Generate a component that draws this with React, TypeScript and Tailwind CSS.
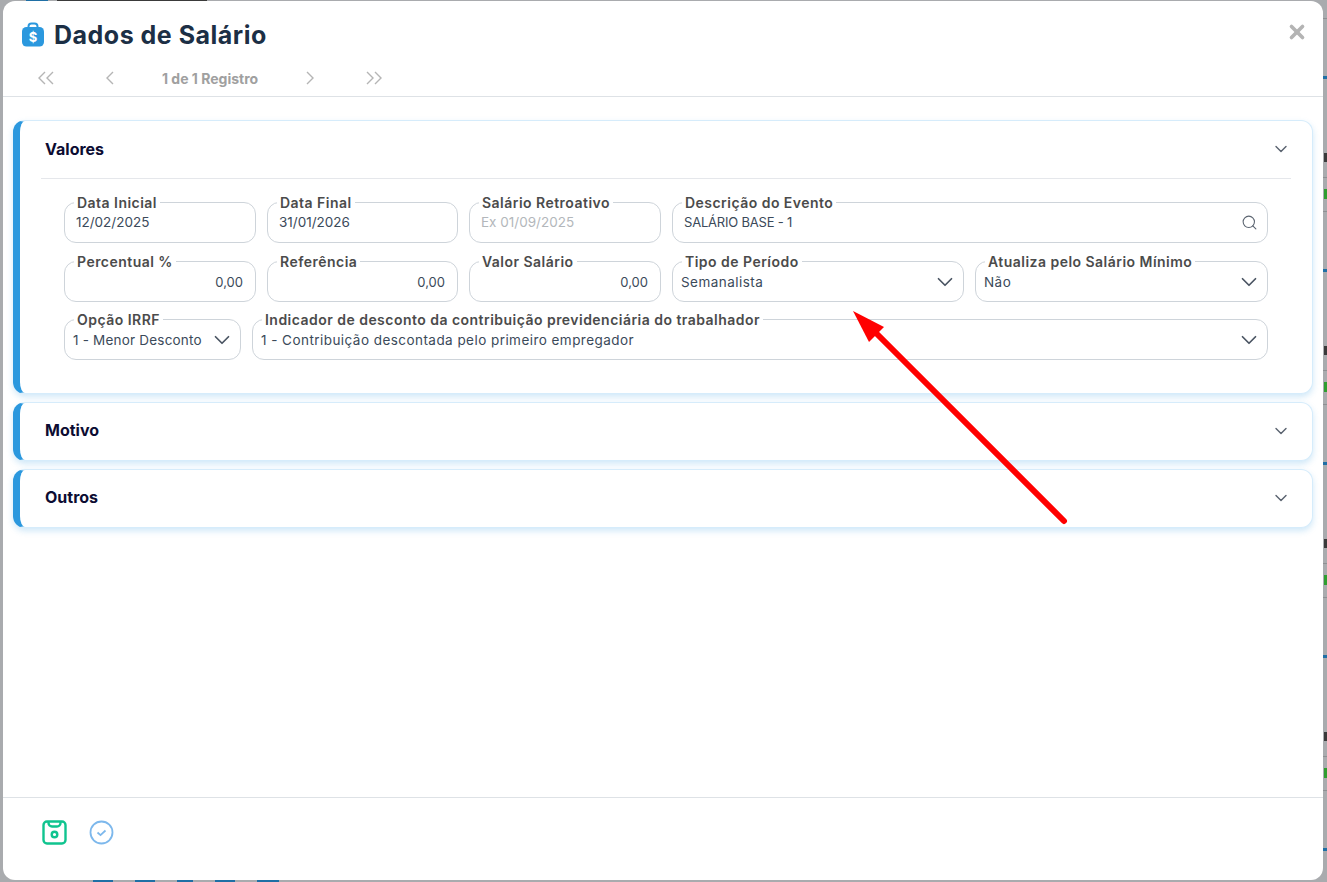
import { ChevronDown, Search, X } from "lucide-react";
import type { ReactNode } from "react";

const font = "font-['Inter','Liberation_Sans',sans-serif]";

function Field({
	label,
	className,
	children,
}: {
	label: string;
	className: string;
	children: ReactNode;
}) {
	return (
		<div
			className={`relative flex h-[41px] items-center rounded-[12px] border border-[#ced4da] ${className}`}
		>
			<span className="absolute -top-[8px] left-[9px] bg-white px-[3px] text-[14px] leading-[16px] font-semibold tracking-[0.47px] whitespace-nowrap text-[#4b4b4b]">
				{label}
			</span>
			{children}
		</div>
	);
}

function Value({ children, muted }: { children: ReactNode; muted?: boolean }) {
	return (
		<span
			className={`pl-[11px] text-[13.5px] ${muted ? "text-[#b3b7bb]" : "text-[#3b4a5a]"}`}
		>
			{children}
		</span>
	);
}

function NumberValue({ children }: { children: ReactNode }) {
	return (
		<span className="mt-[2px] w-full pr-[12px] text-right text-[13px] text-[#3b4a5a]">
			{children}
		</span>
	);
}

function SelectValue({ children }: { children: ReactNode }) {
	return (
		<div className="flex w-full items-center justify-between pr-[5px] pl-[8px]">
			<span className="mt-[2px] text-[13.5px] tracking-[0.45px] whitespace-nowrap text-[#3b4a5a]">
				{children}
			</span>
			<ChevronDown className="size-[26px] text-[#4b5563]" strokeWidth={1.6} />
		</div>
	);
}

function AccordionCard({
	title,
	open,
	children,
}: {
	title: string;
	open?: boolean;
	children?: ReactNode;
}) {
	return (
		<div className="rounded-[12px] border border-l-[7px] border-[#d6ecfb] border-l-[#2b98de] bg-white shadow-[0_3px_6px_rgba(43,152,222,0.22)]">
			<div className="flex h-[57px] items-center justify-between pr-[21px] pb-[2px] pl-[25px]">
				<span
					className={`text-[16px] font-bold text-[#0c0c32] ${open ? "" : "-mt-[2px]"}`}
				>
					{title}
				</span>
				<ChevronDown className="size-[20px] text-[#5b6470]" strokeWidth={1.7} />
			</div>
			{children}
		</div>
	);
}

// linhas da página que ficam visíveis atrás do modal, na margem direita
function BackgroundRow() {
	return (
		<div className="flex h-[193px] flex-col items-end">
			<div className="h-[3px] w-[4px] bg-[#1f6fa5]" />
			<div className="mt-[74px] h-[9px] w-[3px] bg-[#3a3a3a]" />
			<div className="mt-[15px] h-px w-[4px] bg-[#8e9093]" />
			<div className="mt-[11px] h-[10px] w-[3px] bg-[#2f9e2f]" />
			<div className="mt-[12px] h-px w-[4px] bg-[#8e9093]" />
		</div>
	);
}

export default function App() {
	return (
		<div
			className={`relative h-[882px] w-[1327px] overflow-hidden bg-[#a9abae] ${font}`}
		>
			{/* página atrás do modal */}
			<div className="h-[882px] overflow-hidden">
				<div className="flex h-[76px] flex-col">
					<div className="flex h-px gap-[9px] pl-[26px]">
						<div className="w-[22px] bg-[#1f6fa5]" />
						<div className="w-[150px] bg-[#3a3a3a]" />
					</div>
					<div className="mt-[17px] h-px w-[4px] self-end bg-[#8e9093]" />
				</div>
				<BackgroundRow />
				<BackgroundRow />
				<BackgroundRow />
				<BackgroundRow />
				<BackgroundRow />
			</div>
			<div className="absolute bottom-0 left-[93px] flex h-[2px] gap-[22px]">
				<div className="w-[20px] bg-[#1f6fa5]" />
				<div className="w-[20px] bg-[#1f6fa5]" />
				<div className="w-[16px] bg-[#1f6fa5]" />
				<div className="w-[20px] bg-[#1f6fa5]" />
				<div className="w-[22px] bg-[#1f6fa5]" />
			</div>

			{/* modal */}
			<div className="absolute top-px right-[4px] bottom-[2px] left-[3px] flex flex-col rounded-[12px] bg-white">
				<div className="h-[96px] border-b border-[#dee2e6]">
					<div className="flex items-center justify-between pt-[19px] pr-[15px] pl-[18px]">
						<div className="flex items-center gap-[9px]">
							<svg width="24" height="26" viewBox="0 0 24 26">
								<path
									d="M7.5 6V4.5A3 3 0 0 1 10.5 1.5h3a3 3 0 0 1 3 3V6"
									fill="none"
									stroke="#2b98de"
									strokeWidth="2"
								/>
								<rect x="1" y="5" width="22" height="19.5" rx="4.5" fill="#2b98de" />
								<text
									x="12"
									y="20"
									fill="#fff"
									fontSize="13"
									fontWeight="700"
									textAnchor="middle"
								>
									$
								</text>
							</svg>
							<h1 className="text-[25px] leading-[30px] font-bold tracking-[0.5px] text-[#1c2f45]">
								Dados de Salário
							</h1>
						</div>
						<X className="-mt-[6px] size-[22px] text-[#b4b4b4]" strokeWidth={4} />
					</div>
					<div className="mt-[16px] flex items-center pl-[34px] text-[#b5b5b5]">
						<svg width="18" height="14" viewBox="0 0 18 14" fill="none" stroke="currentColor" strokeWidth="1.4">
							<path d="M8 1 2 7l6 6M16 1l-6 6 6 6" />
						</svg>
						<svg className="ml-[50px]" width="10" height="14" viewBox="0 0 10 14" fill="none" stroke="currentColor" strokeWidth="1.4">
							<path d="M8 1 2 7l6 6" />
						</svg>
						<span className="ml-[47px] w-[103px] pt-[2px] text-[14px] font-bold whitespace-nowrap text-[#a0a0a0]">
							1 de 1 Registro
						</span>
						<svg className="ml-[40px]" width="10" height="14" viewBox="0 0 10 14" fill="none" stroke="currentColor" strokeWidth="1.4">
							<path d="m2 1 6 6-6 6" />
						</svg>
						<svg className="ml-[50px]" width="18" height="14" viewBox="0 0 18 14" fill="none" stroke="currentColor" strokeWidth="1.4">
							<path d="m2 1 6 6-6 6M10 1l6 6-6 6" />
						</svg>
					</div>
				</div>

				<div className="flex flex-1 flex-col gap-[8px] pt-[23px] pr-[10px] pl-[10px]">
					<AccordionCard title="Valores" open>
						<div className="mx-[21px] border-t border-[#e5e7eb]" />
						<div className="flex flex-col pt-[23px] pr-[44px] pb-[33px] pl-[44px]">
							<div className="flex gap-[11px]">
								<Field label="Data Inicial" className="w-[192px]">
									<Value>12/02/2025</Value>
								</Field>
								<Field label="Data Final" className="w-[191px]">
									<Value>31/01/2026</Value>
								</Field>
								<Field label="Salário Retroativo" className="w-[192px]">
									<Value muted>Ex 01/09/2025</Value>
								</Field>
								<Field label="Descrição do Evento" className="flex-1 justify-between pr-[9px]">
									<span className="pl-[11px] text-[13px] tracking-[-0.2px] text-[#3b4a5a]">
										SALÁRIO BASE - 1
									</span>
									<Search className="size-[17px] text-[#5b6470]" strokeWidth={1.5} />
								</Field>
							</div>
							<div className="mt-[18px] flex gap-[11px]">
								<Field label="Percentual %" className="w-[192px]">
									<NumberValue>0,00</NumberValue>
								</Field>
								<Field label="Referência" className="w-[191px]">
									<NumberValue>0,00</NumberValue>
								</Field>
								<Field label="Valor Salário" className="w-[192px]">
									<NumberValue>0,00</NumberValue>
								</Field>
								<Field label="Tipo de Período" className="w-[292px]">
									<SelectValue>Semanalista</SelectValue>
								</Field>
								<Field label="Atualiza pelo Salário Mínimo" className="flex-1">
									<SelectValue>Não</SelectValue>
								</Field>
							</div>
							<div className="mt-[17px] flex gap-[11px]">
								<Field label="Opção IRRF" className="w-[177px]">
									<SelectValue>
										<span className="tracking-[0.2px]">1 - Menor Desconto</span>
									</SelectValue>
								</Field>
								<Field
									label="Indicador de desconto da contribuição previdenciária do trabalhador"
									className="flex-1"
								>
									<SelectValue>
										1 - Contribuição descontada pelo primeiro empregador
									</SelectValue>
								</Field>
							</div>
						</div>
					</AccordionCard>
					<AccordionCard title="Motivo" />
					<AccordionCard title="Outros" />
				</div>

				<div className="flex h-[83px] items-center gap-[22px] border-t border-[#dee2e6] pb-[14px] pl-[39px]">
					<svg width="25" height="25" viewBox="0 0 25 25" fill="none" stroke="#10c48f" strokeWidth="2.4">
						<rect x="1.5" y="1.5" width="22" height="22" rx="3.5" />
						<path d="M6.5 1.5v1.5a3.5 3.5 0 0 0 3.5 3.5h5a3.5 3.5 0 0 0 3.5-3.5V1.5" />
						<circle cx="12.5" cy="14.5" r="2.8" />
					</svg>
					<svg width="25" height="25" viewBox="0 0 25 25" fill="none" stroke="#7db8ec" strokeWidth="1.8">
						<circle cx="12.5" cy="12.5" r="11" />
						<path d="m8.5 12.5 3 2.6 5-4.6" strokeWidth="1.8" />
					</svg>
				</div>
			</div>

			{/* seta de anotação */}
			<svg className="pointer-events-none absolute top-0 left-0" width="1327" height="882">
				<line x1="1064" y1="521" x2="875" y2="332" stroke="#ff0000" strokeWidth="6" strokeLinecap="round" />
				<polygon points="853,311 884,327 869,342" fill="#ff0000" />
			</svg>
		</div>
	);
}
